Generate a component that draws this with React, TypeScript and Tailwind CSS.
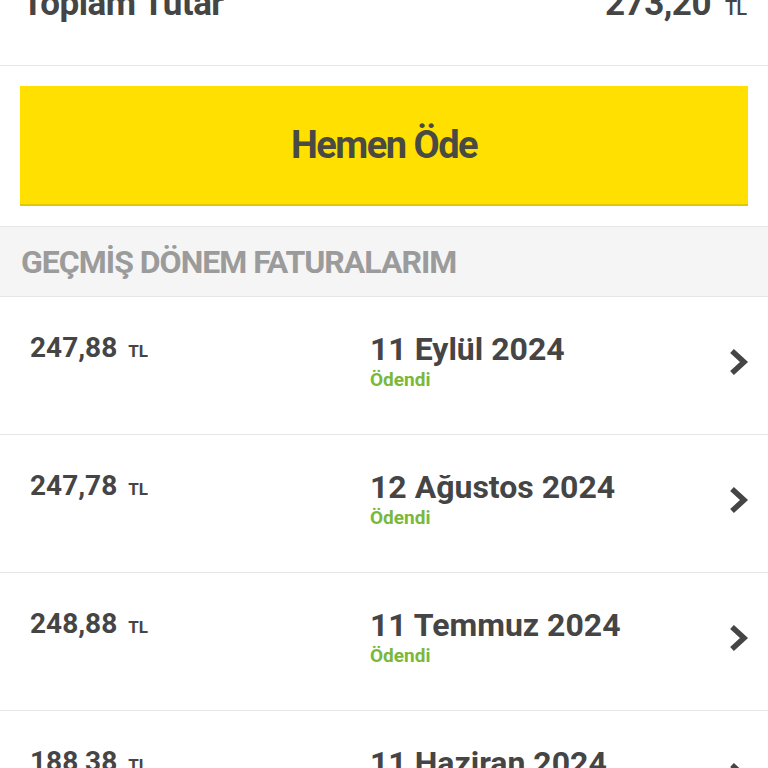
const bills = [
  { amount: "247,88", date: "11 Eylül 2024" },
  { amount: "247,78", date: "12 Ağustos 2024" },
  { amount: "248,88", date: "11 Temmuz 2024" },
  { amount: "188,38", date: "11 Haziran 2024" },
];

const Chevron = () => (
  <svg width="22" height="30" viewBox="0 0 22 30" className="mt-[13px] mr-[-2px]">
    <polyline points="4,4 16,15 4,26" fill="none" stroke="#454545" strokeWidth="5.5" strokeLinejoin="miter" />
  </svg>
);

const App = () => {
  return (
    <div className="w-[768px] h-[768px] overflow-hidden bg-white font-['Roboto',sans-serif] text-[#454545]">
      <div className="flex justify-between items-end h-[70px] -mt-[49px] border-b border-[#e6e6e6] px-[22px] pb-[44px] box-content">
        <span className="text-[35px] font-bold leading-none tracking-[-0.5px]">Toplam Tutar</span>
        <span className="flex items-end gap-[14px]">
          <span className="text-[35px] font-bold leading-none tracking-[-0.5px]">273,20</span>
          <span className="text-[20px] font-medium leading-none mb-[3px] tracking-[-1px]">TL</span>
        </span>
      </div>
      <div className="px-[20px] pt-[20px] pb-[20px]">
        <button className="w-full h-[120px] bg-[#ffe000] border-b-2 border-[#e2c800] flex items-center justify-center text-[38px] font-bold tracking-[-1.5px] text-[#4a4a44]">
          Hemen Öde
        </button>
      </div>
      <div className="h-[71px] bg-[#f5f5f5] border-y border-[#e6e6e6] flex items-center px-[21px]">
        <span className="text-[32px] font-bold text-[#9b9b9b] tracking-[-1px] leading-none">
          GEÇMİŞ DÖNEM FATURALARIM
        </span>
      </div>
      {bills.map((b) => (
        <div key={b.date} className="h-[138px] border-b border-[#e6e6e6] flex items-start pt-[37px] pl-[30px] pr-[20px]">
          <div className="w-[340px] flex items-baseline gap-[11px]">
            <span className="text-[28px] font-bold leading-none">{b.amount}</span>
            <span className="text-[17px] font-bold">TL</span>
          </div>
          <div className="flex-1 flex flex-col -mt-[1px]">
            <span className="text-[32px] font-bold leading-none">{b.date}</span>
            <span className="text-[19px] font-bold text-[#7ab83a] leading-tight mt-[3px]">Ödendi</span>
          </div>
          <Chevron />
        </div>
      ))}
    </div>
  );
};

export default App;
